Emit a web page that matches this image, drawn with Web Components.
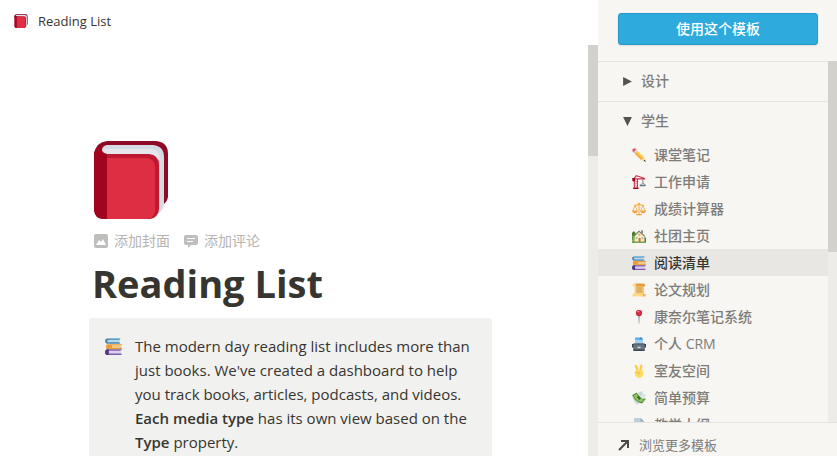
<!DOCTYPE html>
<html lang="zh-CN">
<head>
<meta charset="utf-8">
<meta name="viewport" content="width=device-width, initial-scale=1">
<title>Reading List</title>
<style>
  html, body {
    height: 100%;
    margin: 0;
  }
  body {
    font-family: "Open Sans", "Noto Sans CJK SC", sans-serif;
    font-size: 14px;
    color: #37352f;
    background: #fff;
    overflow: hidden;
  }
</style>
</head>
<body>
<template-app></template-app>

<script>
const icons = {
  book: `<svg viewBox="-2 0 78 78">
    <path fill="#8f0a25" d="M13 0H62Q74 1 74 13V56Q73 62 67 65L40 30L0 20V13Q2 1 13 0Z"/>
    <path fill="#d3dbe4" d="M13 4H59Q70 5 70 16V64Q69 70 63 73L56 20L14 13Q8 12 8 9Q8 5 13 4Z"/>
    <path fill="#e6e7ec" d="M13 8H55Q66 8 66 19V72L58 74L54 16L13 13Q8 12 8 9Z"/>
    <path fill="#e2c4d0" d="M63 18L66 19V71L62 74Z"/>
    <path fill="#be1931" d="M9 13H55Q65 14 65 24V68Q64 77 56 78H9Z"/>
    <path fill="#dd2e44" d="M13 17H53Q61 18 61 26V70Q60 77 53 78H13Z"/>
    <path fill="#a0041e" d="M0 12Q2 5 8 7Q7 12 13 13V78H8Q1 77 0 70Z"/>
  </svg>`,
  pencil: `<svg viewBox="0 0 36 36">
    <path fill="#ea596e" d="M1 8Q0 4 3 2Q6-1 10 2L12 5L4 12Z"/>
    <path fill="#ccd6dd" d="M4 11L11 4L14 7L7 14Z"/>
    <path fill="#ffcc4d" d="M7 14L14 7L31 24L33 34L24 31Z"/>
    <path fill="#f4a93c" d="M7 14L10 11L28 28L24 31Z"/>
    <path fill="#f5d7ac" d="M24 31L31 24L35 35Z"/>
    <path fill="#292f33" d="M30 33L33 30L36 36Z"/>
  </svg>`,
  crane: `<svg viewBox="0 0 36 36">
    <path fill="none" stroke="#c9374d" stroke-width="3" d="M6 33V8L11 2L33 9M1 10H34M14 10V33"/>
    <path fill="none" stroke="#dd5566" stroke-width="2" d="M6 13L14 19L6 25L14 31"/>
    <path fill="#a0041e" d="M1 8H8V16H1ZM3 32H17V36H3Z"/>
    <path fill="none" stroke="#66757f" stroke-width="2" d="M28 11V21M22 26L28 20L34 26"/>
    <path fill="#66757f" d="M20 25H35V29H20Z"/>
  </svg>`,
  scales: `<svg viewBox="0 0 36 36">
    <path fill="none" stroke="#f4b350" stroke-width="3" d="M18 3V31M5 9Q12 9 18 6Q24 9 31 9"/>
    <path fill="none" stroke="#e9a23b" stroke-width="2" d="M8 9L2 23M8 9L14 23M28 9L22 23M28 9L34 23"/>
    <path fill="#f4a23c" d="M0 22H15Q14 29 8 29Q1 29 0 22ZM21 22H36Q35 29 28 29Q22 29 21 22ZM11 31H25V34H11Z"/>
    <circle cx="18" cy="5" r="3" fill="#ffac33"/>
  </svg>`,
  house: `<svg viewBox="0 0 36 36">
    <path fill="#77a353" d="M0 30Q18 25 36 30V36H0Z"/>
    <path fill="#4b7d2c" d="M0 10Q5 1 9 10V29H0ZM31 20Q36 20 36 25V32H29Z"/>
    <path fill="#77b255" d="M1 17H8V29H1Z"/>
    <path fill="#ffe8b6" d="M7 16L19 6L32 17V32H7Z"/>
    <path fill="#7b7a72" d="M24 3H28V11H24ZM4 17L18 4L34 18L32 20L18 8L6 19Z"/>
    <path fill="#c1694f" d="M17 23H22V33H17Z"/>
    <path fill="#88a9b8" d="M10 21H14V25H10ZM25 21H29V25H25ZM17 13H21V17H17Z"/>
  </svg>`,
  books: `<svg viewBox="0 0 36 36">
    <path fill="#4787b0" d="M4 1H32V3H30V10H32V12H4Q0 11 0 6Q0 2 4 1Z"/>
    <path fill="#b9d8e8" d="M6 4H31V9H6Q3 7 6 4Z"/>
    <path fill="#7cb8dc" d="M10 1H32V3H10Z"/>
    <path fill="#ee9a35" d="M5 13H36V15H34V21H36V24H5Q2 23 2 18Q2 14 5 13Z"/>
    <path fill="#efc88b" d="M15 15H35V21H15Z"/>
    <path fill="#7e5fab" d="M4 24H35V26H33V33H35V36H4Q0 35 0 30Q0 25 4 24Z"/>
    <path fill="#dcd3ea" d="M8 27H34V33H8Q5 31 8 27Z"/>
    <path fill="#553788" d="M4 24H8V36H4Q0 34 0 30Q0 26 4 24Z"/>
  </svg>`,
  scroll: `<svg viewBox="0 0 36 36">
    <path fill="#f8c979" d="M7 3H31V31H7Z"/>
    <path fill="#e39f3d" d="M6 1H29Q34 1 34 6Q34 9 31 9H11Q11 1 6 1Z"/>
    <path fill="#ffd983" d="M6 27H28V35H5Q1 35 1 31Q1 27 6 27ZM6 1Q1 1 1 5Q1 9 6 9H9Q11 1 6 1Z"/>
    <path fill="#f0b45c" d="M27 28H35Q36 35 31 35H26Q30 33 27 28Z"/>
    <path stroke="#c98a4f" stroke-width="2" d="M12 13H27M12 18H27M12 23H27"/>
  </svg>`,
  pin: `<svg viewBox="0 0 36 36">
    <path fill="#99aab5" d="M16 15H20L19 34L18 36L17 34Z"/>
    <circle cx="18" cy="8" r="8" fill="#be1931"/>
    <circle cx="18" cy="7" r="7" fill="#d6304a"/>
    <ellipse cx="16" cy="4" rx="3" ry="2" fill="#ea8a9c"/>
  </svg>`,
  cards: `<svg viewBox="0 0 36 36">
    <path fill="#55acee" d="M8 1H18V4H28V20H8Z"/>
    <path fill="#a5d0f0" d="M8 7H28V20H8Z"/>
    <path fill="#3b88c3" d="M19 1H26V6H19Z"/>
    <path fill="#546674" d="M4 16H32L35 22V25H1V22Z"/>
    <path fill="#66757f" d="M3 20H33V35H3Z"/>
    <path fill="#3d4950" d="M0 18H4V27H0ZM32 18H36V27H32ZM4 32H32V36H4Z"/>
    <path fill="#ccd6dd" d="M14 25H22V29H14Z"/>
  </svg>`,
  hand: `<svg viewBox="0 0 36 36">
    <path fill="none" stroke="#ffcc4d" stroke-width="6" stroke-linecap="round" d="M10 5L16 20M24 4L21 20"/>
    <path fill="#ffdc5d" d="M7 19Q14 13 27 16Q31 20 29 27Q26 36 18 36Q10 35 8 28Z"/>
    <path fill="none" stroke="#f2ac4c" stroke-width="2" stroke-linecap="round" d="M9 21Q13 18 15 24M15 21Q18 18 20 24L17 28"/>
  </svg>`,
  money: `<svg viewBox="0 0 36 36">
    <path fill="#ccd6dd" d="M14 8Q19 0 28 1Q24 4 29 5Q25 7 29 10L21 14ZM1 19Q7 15 15 23L21 29Q17 36 10 35Q13 31 7 30Q9 27 4 26Q6 23 1 19Z"/>
    <path fill="#5c913b" d="M0 11L12 4Q21 21 36 20L26 32Q11 31 0 11Z"/>
    <path fill="#8fc66b" d="M4 12L12 8Q20 22 31 23L25 28Q12 27 4 12Z"/>
    <path fill="#3e721d" d="M12 15L17 12L23 20L18 23Z"/>
    <path fill="#dde4e9" d="M23 11Q31 6 36 10Q32 12 35 15Q30 15 31 19L24 20Z"/>
  </svg>`,
  page: `<svg viewBox="0 0 36 36">
    <path fill="#bdd0de" d="M5 0H22L31 9V36H5Z"/>
    <path fill="#8fa8ba" d="M22 0V9H31Z"/>
    <path stroke="#88a6bc" stroke-width="2" d="M10 12H26M10 18H26M10 24H26M10 30H26"/>
  </svg>`,
  image: `<svg viewBox="0 0 14 14">
    <path fill="currentColor" fill-rule="evenodd" d="M2 0H12Q14 0 14 2V12Q14 14 12 14H2Q0 14 0 12V2Q0 0 2 0ZM2 11H12L9 5L7 8L5 6Z"/>
  </svg>`,
  comment: `<svg viewBox="0 0 14 14">
    <path fill="currentColor" fill-rule="evenodd" d="M2 1H12Q14 1 14 3V9Q14 11 12 11H7L4 14V11H2Q0 11 0 9V3Q0 1 2 1ZM3 4V5H11V4ZM3 7V8H9V7Z"/>
  </svg>`,
  arrow: `<svg viewBox="0 0 12 12">
    <path fill="none" stroke="currentColor" stroke-width="2" d="M1 11L10 2M3 2H10V9"/>
  </svg>`,
  triangle: `<svg viewBox="0 0 10 10"><path fill="currentColor" d="M1 1L9 5L1 9Z"/></svg>`,
};

// sets the shadow root of an element from a string
function render(el, html) {
  el.attachShadow({ mode: 'open' }).innerHTML = html;
}

class AppIcon extends HTMLElement {
  constructor() {
    super();
    render(this, '');
  }
  connectedCallback() {
    this.setAttribute('aria-hidden', 'true');
    this.shadowRoot.innerHTML = `
      <style>
        :host {
          display: inline-block;
          flex: none;
          width: 14px;
          height: 14px;
        }
        svg {
          display: block;
          width: 100%;
          height: 100%;
        }
      </style>
      ${icons[this.getAttribute('name')] || ''}
    `;
  }
}

class ScrollTrack extends HTMLElement {
  constructor() {
    super();
    render(this, `
      <style>
        :host {
          display: block;
          flex: none;
          width: 10px;
          background: #edece9;
        }
        div {
          height: var(--thumb, 50%);
          background: #d3d1cb;
        }
      </style>
      <div></div>
    `);
  }
}

class TopBar extends HTMLElement {
  constructor() {
    super();
    render(this, `
      <style>
        :host {
          display: flex;
          align-items: center;
          flex: none;
          height: 45px;
          padding: 0 14px;
          box-sizing: border-box;
        }
        a {
          display: flex;
          align-items: center;
          gap: 10px;
          line-height: 20px;
          font-size: 13px;
          padding-bottom: 3px;
          color: inherit;
          text-decoration: none;
        }
      </style>
      <a href="#"><app-icon name="book"></app-icon><slot></slot></a>
    `);
  }
}

class MetaButton extends HTMLElement {
  constructor() {
    super();
    render(this, `
      <style>
        :host { display: block; }
        button {
          display: flex;
          align-items: center;
          gap: 6px;
          padding: 0;
          border: 0;
          background: none;
          font: inherit;
          line-height: 24px;
          color: #b5b4b1;
          cursor: pointer;
        }
        app-icon { color: #bfbebc; }
      </style>
      <button type="button"><app-icon name="${this.getAttribute('icon')}"></app-icon><slot></slot></button>
    `);
  }
}

class CallOut extends HTMLElement {
  constructor() {
    super();
    render(this, `
      <style>
        :host {
          display: flex;
          gap: 13px;
          padding: 16px;
          border-radius: 3px;
          background: #f1f1ef;
          font-size: 15px;
          line-height: 24px;
        }
        app-icon {
          width: 17px;
          height: 17px;
          margin-top: 4px;
        }
        p { margin: 0; }
        b, ::slotted(b) { font-weight: 600; }
      </style>
      <app-icon name="books"></app-icon>
      <p><slot></slot></p>
    `);
  }
}

class PageContent extends HTMLElement {
  constructor() {
    super();
    render(this, `
      <style>
        :host {
          display: flex;
          flex: 1;
          min-height: 0;
        }
        main {
          flex: 1;
          overflow: hidden;
          padding: 96px 96px 0 89px;
        }
        .icon {
          display: block;
          width: 78px;
          height: 78px;
          margin-left: 3px;
        }
        .meta {
          display: flex;
          gap: 14px;
          margin: 10px 0 0 5px;
        }
        h1 {
          margin: 6px 0 11px 3px;
          font-size: 38px;
          line-height: 48px;
          font-weight: 700;
        }
        scroll-track { --thumb: 27%; }
      </style>
      <main>
        <app-icon class="icon" name="book"></app-icon>
        <div class="meta">
          <meta-button icon="image">添加封面</meta-button>
          <meta-button icon="comment">添加评论</meta-button>
        </div>
        <h1>Reading List</h1>
        <call-out>The modern day reading list includes more than just books. We've created a dashboard to help you track books, articles, podcasts, and videos. <b>Each media type</b> has its own view based on the <b>Type</b> property.</call-out>
      </main>
      <scroll-track></scroll-track>
    `);
  }
}

class TemplateGroup extends HTMLElement {
  constructor() {
    super();
    const open = this.hasAttribute('open');
    render(this, `
      <style>
        :host {
          display: block;
          border-top: 1px solid #e4e3e0;
        }
        :host(:first-child) { border-top: 0; }
        button {
          display: flex;
          align-items: center;
          gap: 8px;
          width: 100%;
          height: 39px;
          padding: 0 24px;
          border: 0;
          background: none;
          font: inherit;
          font-weight: 500;
          color: #7d7c78;
          cursor: pointer;
        }
        span { padding-bottom: 3px; }
        app-icon {
          width: 11px;
          height: 11px;
          color: #55534e;
        }
        :host([open]) app-icon { transform: rotate(90deg); }
      </style>
      <button type="button" aria-expanded="${open}"><app-icon name="triangle"></app-icon><span>${this.getAttribute('label')}</span></button>
      <slot></slot>
    `);
  }
}

class TemplateItem extends HTMLElement {
  constructor() {
    super();
    render(this, `
      <style>
        :host { display: block; }
        a {
          display: flex;
          align-items: center;
          gap: 8px;
          height: 27px;
          padding: 0 34px;
          font-weight: 500;
          color: #7d7c78;
          text-decoration: none;
        }
        span { padding-bottom: 2px; }
        :host([selected]) a {
          background: #e8e7e4;
          color: #37352f;
        }
      </style>
      <a href="#"><app-icon name="${this.getAttribute('icon')}"></app-icon><span><slot></slot></span></a>
    `);
  }
}

class TemplateSidebar extends HTMLElement {
  constructor() {
    super();
    render(this, `
      <style>
        :host {
          display: flex;
          flex-direction: column;
          flex: none;
          width: 239px;
          background: #f7f6f3;
        }
        .action {
          display: flex;
          padding: 13px 19px 16px 20px;
        }
        .action button {
          flex: 1;
          height: 32px;
          padding: 0 0 2px;
          border: 1px solid #2799c7;
          border-radius: 3px;
          background: #2eaadc;
          box-shadow: 0 1px 2px rgba(15, 15, 15, 0.1);
          font: inherit;
          font-weight: 500;
          color: #fff;
          cursor: pointer;
        }
        .list {
          display: flex;
          flex: 1;
          min-height: 0;
        }
        nav {
          flex: 1;
          overflow: hidden;
          border-top: 1px solid #e4e3e0;
        }
        scroll-track {
          --thumb: 53%;
          width: 9px;
        }
        .more {
          display: flex;
          align-items: center;
          gap: 9px;
          padding: 11px 20px 0;
          border-top: 1px solid #e4e3e0;
          font-size: 13px;
          line-height: 22px;
          color: #7d7c78;
          text-decoration: none;
        }
        .more app-icon {
          width: 12px;
          height: 12px;
          color: #4b4a45;
        }
      </style>
      <div class="action"><button type="button">使用这个模板</button></div>
      <div class="list">
        <nav>
          <template-group label="设计"></template-group>
          <template-group label="学生" open>
            <template-item icon="pencil">课堂笔记</template-item>
            <template-item icon="crane">工作申请</template-item>
            <template-item icon="scales">成绩计算器</template-item>
            <template-item icon="house">社团主页</template-item>
            <template-item icon="books" selected>阅读清单</template-item>
            <template-item icon="scroll">论文规划</template-item>
            <template-item icon="pin">康奈尔笔记系统</template-item>
            <template-item icon="cards">个人 CRM</template-item>
            <template-item icon="hand">室友空间</template-item>
            <template-item icon="money">简单预算</template-item>
            <template-item icon="page">教学大纲</template-item>
          </template-group>
        </nav>
        <scroll-track></scroll-track>
      </div>
      <a class="more" href="#"><app-icon name="arrow"></app-icon>浏览更多模板</a>
    `);
  }
}

class TemplateApp extends HTMLElement {
  constructor() {
    super();
    render(this, `
      <style>
        :host {
          display: flex;
          height: 100vh;
        }
        .page {
          display: flex;
          flex-direction: column;
          flex: 1;
          min-width: 0;
        }
      </style>
      <div class="page">
        <top-bar>Reading List</top-bar>
        <page-content></page-content>
      </div>
      <template-sidebar></template-sidebar>
    `);
  }
}

customElements.define('app-icon', AppIcon);
customElements.define('scroll-track', ScrollTrack);
customElements.define('top-bar', TopBar);
customElements.define('meta-button', MetaButton);
customElements.define('call-out', CallOut);
customElements.define('page-content', PageContent);
customElements.define('template-group', TemplateGroup);
customElements.define('template-item', TemplateItem);
customElements.define('template-sidebar', TemplateSidebar);
customElements.define('template-app', TemplateApp);
</script>
</body>
</html>
